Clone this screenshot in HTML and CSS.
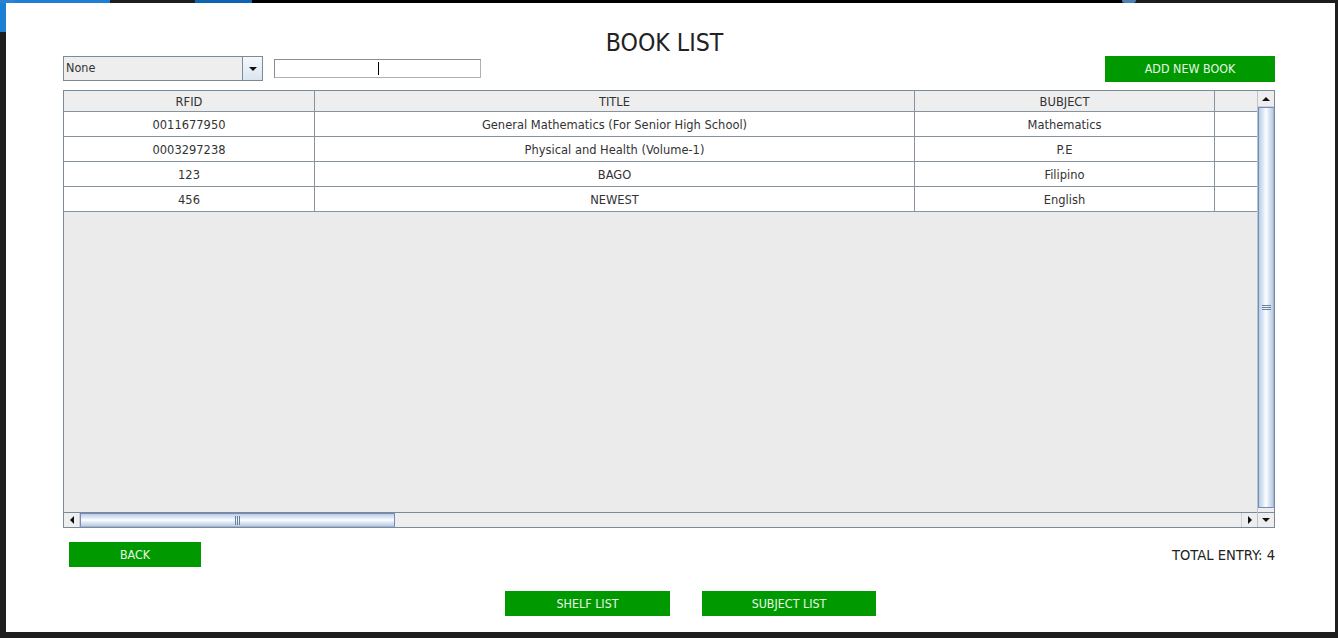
FILE: index.html
```html
<!DOCTYPE html>
<html>
<head>
<meta charset="utf-8">
<title>Book List</title>
<link rel="stylesheet" href="styles.css">
</head>
<body>
<div class="screen">
  <div class="topbar">
    <span class="seg seg-icon"></span>
    <span class="seg seg-blue" style="width:95px"></span>
    <span class="seg seg-dark" style="width:85px"></span>
    <span class="seg seg-blue2" style="width:57px"></span>
    <span class="seg seg-black" style="width:870px"></span>
    <span class="seg seg-circle"></span>
    <span class="seg seg-gray"></span>
  </div>
  <div class="main">
    <div class="leftstrip"><div class="leftstrip-blue"></div></div>
    <div class="window">
      <h1 class="title">BOOK LIST</h1>
      <div class="toolbar">
        <div class="combo">
          <span class="combo-text">None</span>
          <span class="combo-btn"><span class="tri tri-down"></span></span>
        </div>
        <div class="field"><span class="caret"></span></div>
        <button class="btn btn-add">ADD NEW BOOK</button>
      </div>
      <div class="pane">
        <div class="viewport">
          <table class="grid">
            <colgroup>
              <col style="width:251px">
              <col style="width:600px">
              <col style="width:300px">
              <col style="width:42px">
            </colgroup>
            <thead>
              <tr><th>RFID</th><th>TITLE</th><th>BUBJECT</th><th class="last"></th></tr>
            </thead>
            <tbody>
              <tr><td>0011677950</td><td>General Mathematics (For Senior High School)</td><td>Mathematics</td><td class="last"></td></tr>
              <tr><td>0003297238</td><td>Physical and Health (Volume-1)</td><td>P.E</td><td class="last"></td></tr>
              <tr><td>123</td><td>BAGO</td><td>Filipino</td><td class="last"></td></tr>
              <tr><td>456</td><td>NEWEST</td><td>English</td><td class="last"></td></tr>
            </tbody>
          </table>
        </div>
        <div class="vscroll">
          <span class="sb-btn"><span class="tri tri-up"></span></span>
          <div class="vtrack">
            <div class="vthumb"><span class="vgrip"></span></div>
          </div>
          <span class="sb-btn sb-btn-down"><span class="tri tri-down"></span></span>
        </div>
        <div class="hscroll">
          <span class="hs-btn"><span class="tri tri-left"></span></span>
          <div class="htrack">
            <div class="hthumb"><span class="hgrip"></span></div>
          </div>
          <span class="hs-btn hs-btn-right"><span class="tri tri-right"></span></span>
        </div>
      </div>
      <div class="bottomrow">
        <button class="btn btn-back">BACK</button>
        <span class="total">TOTAL ENTRY: 4</span>
      </div>
      <div class="footer">
        <button class="btn btn-shelf">SHELF LIST</button>
        <button class="btn btn-subject">SUBJECT LIST</button>
      </div>
    </div>
  </div>
</div>
</body>
</html>
```

FILE: styles.css
```css
* { box-sizing: border-box; }
html, body {
  margin: 0;
  padding: 0;
  background: #1e1e1e;
}
body {
  width: 1338px;
  height: 638px;
  overflow: hidden;
  font-family: "DejaVu Sans Condensed", "DejaVu Sans", sans-serif;
  font-stretch: semi-condensed;
  color: #333;
}
.screen {
  width: 1338px;
  height: 638px;
  display: flex;
  flex-direction: column;
}
.topbar {
  height: 3px;
  display: flex;
  background: #1e1e1e;
}
.seg { display: block; height: 3px; }
.seg-icon { width: 15px; background: #2a84d2; }
.seg-blue { background: #1b7fd3; }
.seg-dark { background: #1e1e1e; }
.seg-blue2 { background: #0e63b3; }
.seg-black { background: #000; }
.seg-circle { width: 14px; background: #4c7fb8; border-radius: 0 0 7px 7px; }
.seg-gray { flex: 1; background: #1c1c1c; }

.main {
  display: flex;
  height: 629px;
}
.leftstrip {
  width: 6px;
  background: #1e1e1e;
}
.leftstrip-blue {
  height: 29px;
  background: #1b7fd3;
}
.window {
  width: 1329px;
  height: 629px;
  background: #fff;
  padding: 0 60px 0 57px;
  display: flex;
  flex-direction: column;
}
.title {
  margin: 0;
  padding: 27px 9px 0 0;
  height: 53px;
  line-height: 26px;
  font-size: 24.6px;
  font-weight: normal;
  text-align: center;
  color: #222;
}

.toolbar {
  height: 26px;
  display: flex;
  align-items: flex-start;
}
.combo {
  width: 200px;
  height: 25px;
  border: 1px solid #7a8a99;
  background: #eeeeee;
  display: flex;
}
.combo-text {
  flex: 1;
  font-size: 12.5px;
  line-height: 22px;
  padding-left: 2px;
  color: #333;
}
.combo-btn {
  width: 20px;
  border-left: 1px solid #7a8a99;
  background: linear-gradient(#f4f8fc, #dbe5f1);
  display: flex;
  align-items: center;
  justify-content: center;
}
.field {
  width: 207px;
  height: 19px;
  margin-left: 11px;
  margin-top: 3px;
  border: 1px solid #8c8c8c;
  border-right-color: #b0b0b0;
  border-bottom-color: #b0b0b0;
  background: #fff;
  position: relative;
}
.caret {
  position: absolute;
  left: 103px;
  top: 2px;
  width: 1px;
  height: 13px;
  background: #000;
}
.btn {
  border: 0;
  margin: 0;
  padding: 0;
  background: #009900;
  color: #e6f8e6;
  font-family: "DejaVu Sans Condensed", "DejaVu Sans", sans-serif;
  font-stretch: semi-condensed;
  font-size: 12.4px;
  height: 25px;
  line-height: 25px;
  text-align: center;
}
.btn-add {
  margin-left: auto;
  width: 170px;
  height: 26px;
  line-height: 24px;
}

.pane {
  margin-top: 8px;
  height: 438px;
  border: 1px solid #7a8a99;
  display: grid;
  grid-template-columns: 1193px 17px;
  grid-template-rows: 421px 15px;
  background: #ebebeb;
}
.viewport {
  grid-column: 1;
  grid-row: 1;
  overflow: hidden;
  background: #ebebeb;
}
.grid {
  border-collapse: separate;
  border-spacing: 0;
  table-layout: fixed;
  width: 1193px;
  font-size: 12.75px;
}
.grid th {
  height: 21px;
  padding: 1px 0 0 0;
  font-weight: normal;
  background: #eeeeef;
  color: #333;
  border-right: 1px solid #8893a0;
  border-bottom: 1px solid #8893a0;
  text-align: center;
  line-height: 19px;
}
.grid td {
  height: 25px;
  padding: 1px 0 0 0;
  background: #fff;
  border-right: 1px solid #8893a0;
  border-bottom: 1px solid #8893a0;
  text-align: center;
  line-height: 23px;
  color: #333;
}
.grid .last { border-right: 0; }

.vscroll {
  grid-column: 2;
  grid-row: 1 / span 2;
  display: flex;
  flex-direction: column;
  background: #eeeeee;
  border-left: 1px solid #b8c4d0;
}
.sb-btn {
  height: 16px;
  display: flex;
  align-items: center;
  justify-content: center;
  background: #eeeeee;
  border-bottom: 1px solid #c9d3de;
}
.sb-btn-down {
  border-bottom: 0;
  border-top: 1px solid #7a8a99;
  height: 15px;
}
.vtrack {
  flex: 1;
  padding: 0 0 4px 0;
}
.vthumb {
  height: 401px;
  border: 1px solid #7a8ab0;
  border-right-color: #a4b4cc;
  background: linear-gradient(90deg, #b9cde8 0%, #e4eef9 35%, #ffffff 50%, #d6e3f3 75%, #b9cde8 100%);
  display: flex;
  align-items: center;
  justify-content: center;
}
.vgrip {
  width: 9px;
  height: 5px;
  background: repeating-linear-gradient(#6a7f9e 0 1px, transparent 1px 2px);
}
.hscroll {
  grid-column: 1;
  grid-row: 2;
  display: flex;
  background: #eeeeee;
  border-top: 1px solid #7a8a99;
}
.hs-btn {
  width: 16px;
  display: flex;
  align-items: center;
  justify-content: center;
  background: #eeeeee;
  border-right: 1px solid #c9d3de;
}
.hs-btn-right {
  border-right: 0;
  border-left: 1px solid #c9d3de;
}
.htrack {
  flex: 1;
}
.hthumb {
  width: 315px;
  height: 100%;
  border: 1px solid #7a8ab0;
  border-bottom-color: #a4b4cc;
  background: linear-gradient(#b9cde8 0%, #e4eef9 35%, #ffffff 50%, #d6e3f3 75%, #b9cde8 100%);
  display: flex;
  align-items: center;
  justify-content: center;
}
.hgrip {
  width: 5px;
  height: 9px;
  background: repeating-linear-gradient(90deg, #6a7f9e 0 1px, transparent 1px 2px);
}

.tri { display: block; width: 0; height: 0; }
.tri-down {
  border-left: 4px solid transparent;
  border-right: 4px solid transparent;
  border-top: 4px solid #111;
}
.tri-up {
  border-left: 4px solid transparent;
  border-right: 4px solid transparent;
  border-bottom: 4px solid #111;
}
.tri-left {
  border-top: 4px solid transparent;
  border-bottom: 4px solid transparent;
  border-right: 4px solid #111;
}
.tri-right {
  border-top: 4px solid transparent;
  border-bottom: 4px solid transparent;
  border-left: 4px solid #111;
}

.bottomrow {
  margin-top: 14px;
  height: 25px;
  display: flex;
  align-items: center;
}
.btn-back {
  margin-left: 6px;
  width: 132px;
}
.total {
  margin-left: auto;
  font-size: 14.6px;
  color: #222;
}
.footer {
  margin-top: 24px;
  height: 25px;
  display: flex;
  gap: 32px;
  padding-left: 442px;
}
.btn-shelf { width: 165px; }
.btn-subject { width: 174px; }
```
